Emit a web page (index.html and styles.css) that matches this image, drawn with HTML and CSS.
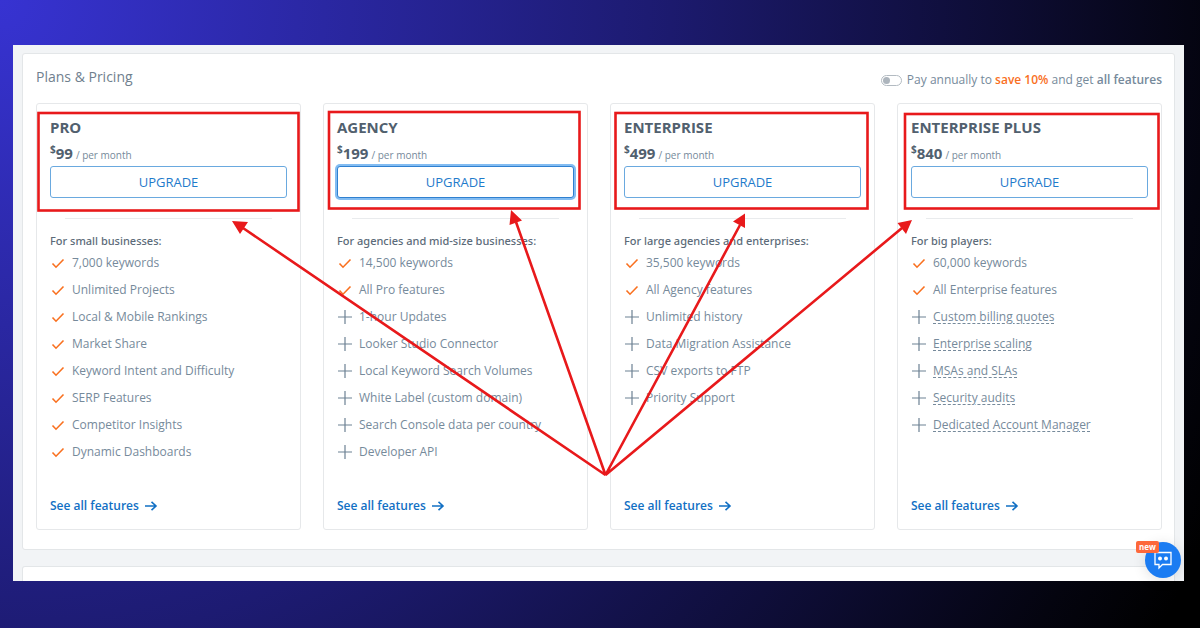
FILE: index.html
```html
<!DOCTYPE html>
<html lang="en">
<head>
<meta charset="utf-8">
<title>Plans &amp; Pricing</title>
<link rel="stylesheet" href="styles.css">
</head>
<body>
<svg class="symbols" aria-hidden="true">
  <symbol id="check" viewBox="0 0 16 16"><path d="M2.500 8.500 6 12.200 13.500 4.500" fill="none" stroke="#f9701f" stroke-width="1.600"/></symbol>
  <symbol id="plus" viewBox="0 0 16 16"><path d="M8 1v14M1 8h14" fill="none" stroke="#6d8193" stroke-width="1.200"/></symbol>
  <symbol id="arrow" viewBox="0 0 14 12"><path d="M1 6h11M7.500 1.800 12 6l-4.500 4.200" fill="none" stroke="#1270c4" stroke-width="1.600"/></symbol>
</svg>
<main class="frame">
  <section class="panel">
    <header class="panel-head">
      <h1 class="title">Plans &amp; Pricing</h1>
      <label class="annual"><input class="switch" type="checkbox" role="switch"><span>Pay annually to <b class="save">save 10%</b> and get <b class="all">all features</b></span></label>
    </header>
    <div class="plans">
      <article class="card">
        <h2 class="name">PRO</h2>
        <p class="price"><span class="dollar">$</span><b class="amount">99</b><span class="period">/ per month</span></p>
        <button class="upgrade" type="button">UPGRADE</button>
        <hr class="rule">
        <h3 class="audience">For small businesses:</h3>
        <ul class="features">
          <li><svg class="icon"><use href="#check"/></svg>7,000 keywords</li>
          <li><svg class="icon"><use href="#check"/></svg>Unlimited Projects</li>
          <li><svg class="icon"><use href="#check"/></svg>Local &amp; Mobile Rankings</li>
          <li><svg class="icon"><use href="#check"/></svg>Market Share</li>
          <li><svg class="icon"><use href="#check"/></svg>Keyword Intent and Difficulty</li>
          <li><svg class="icon"><use href="#check"/></svg>SERP Features</li>
          <li><svg class="icon"><use href="#check"/></svg>Competitor Insights</li>
          <li><svg class="icon"><use href="#check"/></svg>Dynamic Dashboards</li>
        </ul>
        <a class="more" href="#">See all features <svg class="arrow"><use href="#arrow"/></svg></a>
      </article>
      <article class="card">
        <h2 class="name">AGENCY</h2>
        <p class="price"><span class="dollar">$</span><b class="amount">199</b><span class="period">/ per month</span></p>
        <button class="upgrade focused" type="button">UPGRADE</button>
        <hr class="rule">
        <h3 class="audience">For agencies and mid-size businesses:</h3>
        <ul class="features">
          <li><svg class="icon"><use href="#check"/></svg>14,500 keywords</li>
          <li><svg class="icon"><use href="#check"/></svg>All Pro features</li>
          <li><svg class="icon"><use href="#plus"/></svg>1-hour Updates</li>
          <li><svg class="icon"><use href="#plus"/></svg>Looker Studio Connector</li>
          <li><svg class="icon"><use href="#plus"/></svg>Local Keyword Search Volumes</li>
          <li><svg class="icon"><use href="#plus"/></svg>White Label (custom domain)</li>
          <li><svg class="icon"><use href="#plus"/></svg>Search Console data per country</li>
          <li><svg class="icon"><use href="#plus"/></svg>Developer API</li>
        </ul>
        <a class="more" href="#">See all features <svg class="arrow"><use href="#arrow"/></svg></a>
      </article>
      <article class="card">
        <h2 class="name">ENTERPRISE</h2>
        <p class="price"><span class="dollar">$</span><b class="amount">499</b><span class="period">/ per month</span></p>
        <button class="upgrade" type="button">UPGRADE</button>
        <hr class="rule">
        <h3 class="audience">For large agencies and enterprises:</h3>
        <ul class="features">
          <li><svg class="icon"><use href="#check"/></svg>35,500 keywords</li>
          <li><svg class="icon"><use href="#check"/></svg>All Agency features</li>
          <li><svg class="icon"><use href="#plus"/></svg>Unlimited history</li>
          <li><svg class="icon"><use href="#plus"/></svg>Data Migration Assistance</li>
          <li><svg class="icon"><use href="#plus"/></svg>CSV exports to FTP</li>
          <li><svg class="icon"><use href="#plus"/></svg>Priority Support</li>
        </ul>
        <a class="more" href="#">See all features <svg class="arrow"><use href="#arrow"/></svg></a>
      </article>
      <article class="card">
        <h2 class="name">ENTERPRISE PLUS</h2>
        <p class="price"><span class="dollar">$</span><b class="amount">840</b><span class="period">/ per month</span></p>
        <button class="upgrade" type="button">UPGRADE</button>
        <hr class="rule">
        <h3 class="audience">For big players:</h3>
        <ul class="features">
          <li><svg class="icon"><use href="#check"/></svg>60,000 keywords</li>
          <li><svg class="icon"><use href="#check"/></svg>All Enterprise features</li>
          <li><svg class="icon"><use href="#plus"/></svg><span class="hint">Custom billing quotes</span></li>
          <li><svg class="icon"><use href="#plus"/></svg><span class="hint">Enterprise scaling</span></li>
          <li><svg class="icon"><use href="#plus"/></svg><span class="hint">MSAs and SLAs</span></li>
          <li><svg class="icon"><use href="#plus"/></svg><span class="hint">Security audits</span></li>
          <li><svg class="icon"><use href="#plus"/></svg><span class="hint">Dedicated Account Manager</span></li>
        </ul>
        <a class="more" href="#">See all features <svg class="arrow"><use href="#arrow"/></svg></a>
      </article>
    </div>
  </section>
  <section class="panel next"></section>
  <button class="chat" type="button" aria-label="Open chat">
    <svg class="chat-icon" viewBox="0 0 20 20"><path d="M2 2.500h16v12H9.500L6 18v-3.500H2z" fill="none" stroke="#fff" stroke-width="1.300"/><circle cx="7" cy="8.500" r="2" fill="#fff"/><circle cx="13" cy="8.500" r="2" fill="#fff"/></svg>
    <span class="badge">new</span>
  </button>
</main>
<svg class="marks" viewBox="0 0 1200 628" aria-hidden="true">
  <g fill="none" stroke="#e8191b" stroke-width="2.600">
    <rect x="38.500" y="113" width="260" height="97.500"/>
    <rect x="329" y="112" width="250.500" height="96.500"/>
    <rect x="615.500" y="113" width="252" height="95.500"/>
    <rect x="905" y="114" width="253.500" height="94.500"/>
    <path d="M243 228 605.500 475 516 222M605.500 475 740 225M605.500 475 902 228" stroke-linejoin="bevel"/>
  </g>
  <path d="M232 221 248 222 240 234zM511 210 522 220.500 509.500 225zM745 213.500 745 228 733 221.500zM912 220 906 234 897.500 223z" fill="#e8191b"/>
</svg>
</body>
</html>
```
FILE: styles.css
```css
* { box-sizing: border-box; }
body {
  margin: 0;
  min-height: 100vh;
  padding: 45px 16px 47px 13px;
  position: relative;
  font-family: "Open Sans", "Noto Sans", sans-serif;
  font-size: 12px;
  color: #768a9b;
  background: radial-gradient(circle farthest-side at 0 0, #3733d2 0%, #1d1b72 54%, #04040f 101%, #000 110%);
}
h1, h2, h3, p, ul { margin: 0; padding: 0; font-weight: 400; }
.symbols { display: none; }
.frame {
  position: relative;
  min-height: 536px;
  padding: 8px 9px 0;
  display: flex;
  flex-direction: column;
  gap: 16px;
  background: #f2f4f6;
}
.panel {
  padding: 13px 12px 19px 13px;
  background: #fff;
  border: 1px solid #e3e6e8;
  border-radius: 3px;
}
.next {
  flex: 1;
  padding: 0;
  border-bottom: 0;
  border-radius: 3px 3px 0 0;
}
.panel-head {
  display: flex;
  justify-content: space-between;
  height: 36px;
}
.title { font-size: 14px; line-height: 20px; color: #70808e; }
.annual {
  display: flex;
  align-items: center;
  gap: 5px;
  height: 26px;
  line-height: 26px;
}
.switch {
  appearance: none;
  display: flex;
  align-items: center;
  margin: 0;
  padding: 0 1px;
  width: 21px;
  height: 11px;
  border: 1px solid #b3bbc2;
  border-radius: 6px;
  background: #fff;
}
.switch::before {
  content: "";
  width: 7px;
  height: 7px;
  border-radius: 50%;
  background: #adb5bd;
}
.annual b { font-weight: 600; }
.annual .save { color: #f9701f; }
.plans {
  display: grid;
  grid-template-columns: repeat(4, 1fr);
  gap: 22px;
}
.card {
  display: flex;
  flex-direction: column;
  min-height: 427px;
  padding: 13px 13px 15px;
  border: 1px solid #e6e8ea;
  border-radius: 3px;
}
.name { font-size: 15px; font-weight: 700; line-height: 20px; color: #51606e; }
.price {
  display: flex;
  align-items: baseline;
  height: 29px;
  line-height: 32px;
  color: #51606e;
}
.dollar { font-size: 10px; font-weight: 700; line-height: 24px; align-self: flex-start; }
.amount { font-size: 15px; }
.period { margin-left: 3px; font-size: 10px; color: #768a9b; }
.upgrade {
  height: 32px;
  border: 1px solid #6aa9df;
  border-radius: 3px;
  background: #fff;
  color: #1f7bcb;
  font: 13px "Open Sans", "Noto Sans", sans-serif;
}
.focused { border-color: #2f80d0; box-shadow: 0 0 0 2px #82bcf2; }
.rule {
  width: calc(100% - 30px);
  margin: 20px auto 14px;
  border: 0;
  border-top: 1px solid #e9ebed;
}
.audience {
  font-family: "Noto Sans", "Open Sans", sans-serif;
  font-size: 11px;
  font-weight: 500;
  line-height: 16px;
  color: #5c6b79;
}
.features { list-style: none; }
.features li {
  display: flex;
  align-items: center;
  gap: 6px;
  height: 27px;
}
.icon { width: 16px; height: 16px; }
.hint { text-decoration: underline dashed 1px; text-underline-offset: 2px; }
.more {
  display: flex;
  align-items: center;
  gap: 5px;
  margin-top: auto;
  line-height: 16px;
  font-weight: 600;
  color: #1270c4;
  text-decoration: none;
}
.arrow { width: 14px; height: 12px; }
.chat {
  position: absolute;
  right: 3px;
  bottom: 3px;
  width: 36px;
  height: 36px;
  padding: 0;
  display: grid;
  place-items: center;
  border: 0;
  border-radius: 50%;
  background: #1b7cf2;
  box-shadow: 0 2px 14px rgba(0, 0, 0, .12);
}
.chat-icon { width: 20px; height: 20px; }
.badge {
  position: absolute;
  left: -9px;
  top: -1px;
  padding: 0 3px;
  border-radius: 2px;
  background: #fd683b;
  color: #fff;
  font: 700 8px/12px "Open Sans", sans-serif;
}
.marks {
  position: absolute;
  left: 0;
  top: 0;
  width: 100%;
  pointer-events: none;
}
```
